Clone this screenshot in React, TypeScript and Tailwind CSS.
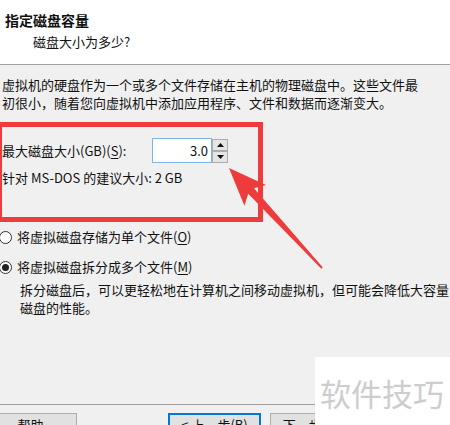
import React from 'react';

const Radio: React.FC<{ checked?: boolean }> = ({ checked }) => (
  <span className="relative inline-flex h-[13px] w-[13px] shrink-0 items-center justify-center rounded-full border border-[#333] bg-white">
    {checked && <span className="h-[7px] w-[7px] rounded-full bg-[#222]"></span>}
  </span>
);

const SpinButton: React.FC<{ up?: boolean }> = ({ up }) => (
  <div className="flex h-[12px] w-[16px] items-center justify-center border border-[#acacac] bg-[#e5e5e5]">
    <svg width="7" height="4" viewBox="0 0 7 4">
      {up ? <polygon points="0,4 7,4 3.5,0" fill="#111" /> : <polygon points="0,0 7,0 3.5,4" fill="#111" />}
    </svg>
  </div>
);

export default function App() {
  return (
    <div className="relative flex h-[425px] w-[450px] flex-col overflow-hidden bg-[#f0f0f0] font-['Noto_Sans_CJK_SC','Noto_Sans',sans-serif] text-[13px] text-[#111]">
      {/* Header */}
      <div className="h-[65px] shrink-0 border-b border-[#a0a0a0] bg-white pl-[5px] pt-[9px]">
        <div className="text-[14px] font-bold leading-[22px]">指定磁盘容量</div>
        <div className="pl-[28px] leading-[22px]">磁盘大小为多少?</div>
      </div>

      {/* Body */}
      <div className="flex flex-col pl-[2px]">
        <p className="mt-[11px] whitespace-nowrap leading-[18px]">
          虚拟机的硬盘作为一个或多个文件存储在主机的物理磁盘中。这些文件最
          <br />
          初很小，随着您向虚拟机中添加应用程序、文件和数据而逐渐变大。
        </p>

        <div className="mt-[26px] flex h-[25px] items-center">
          <span className="w-[150px] leading-[18px]">
            最大磁盘大小(GB)(<span className="underline underline-offset-2">S</span>):
          </span>
          <div className="flex h-[25px] w-[60px] items-center justify-end border border-[#7eb4ea] bg-white pr-[3px]">
            3.0
          </div>
          <div className="flex flex-col">
            <SpinButton up />
            <SpinButton />
          </div>
        </div>

        <div className="mt-[6px] leading-[18px]">针对 MS-DOS 的建议大小: 2 GB</div>

        <label className="ml-[-3px] mt-[41px] flex items-center gap-[5px] leading-[18px]">
          <Radio />
          <span>
            将虚拟磁盘存储为单个文件(<span className="underline underline-offset-2">O</span>)
          </span>
        </label>
        <label className="ml-[-3px] mt-[12px] flex items-center gap-[5px] leading-[18px]">
          <Radio checked />
          <span>
            将虚拟磁盘拆分成多个文件(<span className="underline underline-offset-2">M</span>)
          </span>
        </label>
        <p className="mt-[5px] whitespace-nowrap pl-[18px] leading-[18px]">
          拆分磁盘后，可以更轻松地在计算机之间移动虚拟机，但可能会降低大容量
          <br />
          磁盘的性能。
        </p>
      </div>

      <div className="flex-1"></div>

      {/* Footer */}
      <div className="h-[21px] shrink-0 border-t border-[#a0a0a0]">
        <div className="mt-[8px] flex">
          <button className="ml-[-16px] h-[23px] w-[93px] border border-[#adadad] bg-[#e1e1e1] leading-[21px]">帮助</button>
          <button className="ml-[91px] h-[23px] w-[93px] border-2 border-[#0078d7] bg-[#e1e1e1] leading-[19px]">
            &lt; 上一步(<span className="underline">B</span>)
          </button>
          <button className="ml-[9px] h-[23px] w-[93px] border border-[#adadad] bg-[#e1e1e1] leading-[21px]">
            下一步(<span className="underline">N</span>) &gt;
          </button>
        </div>
      </div>

      {/* Annotation: red box */}
      <div className="pointer-events-none absolute left-[-3px] top-[122px] h-[100px] w-[266px] border-[5px] border-[#ee3b3b]"></div>

      {/* Annotation: arrow */}
      <svg className="pointer-events-none absolute inset-0" width="450" height="425" viewBox="0 0 450 425">
        <polygon
          points="229,168 266,185 254,188.2 322.7,267.3 321.3,268.7 248.2,193.8 244.4,205.8"
          fill="#ee3b3b"
        />
      </svg>

      {/* Watermark */}
      <div className="absolute left-[315px] top-[357px] flex h-[68px] w-[135px] items-start bg-white pl-[5px] pt-[18px]">
        <span className="text-[31px] leading-[36px] text-[#cdcdcd]">软件技巧</span>
      </div>
    </div>
  );
}
